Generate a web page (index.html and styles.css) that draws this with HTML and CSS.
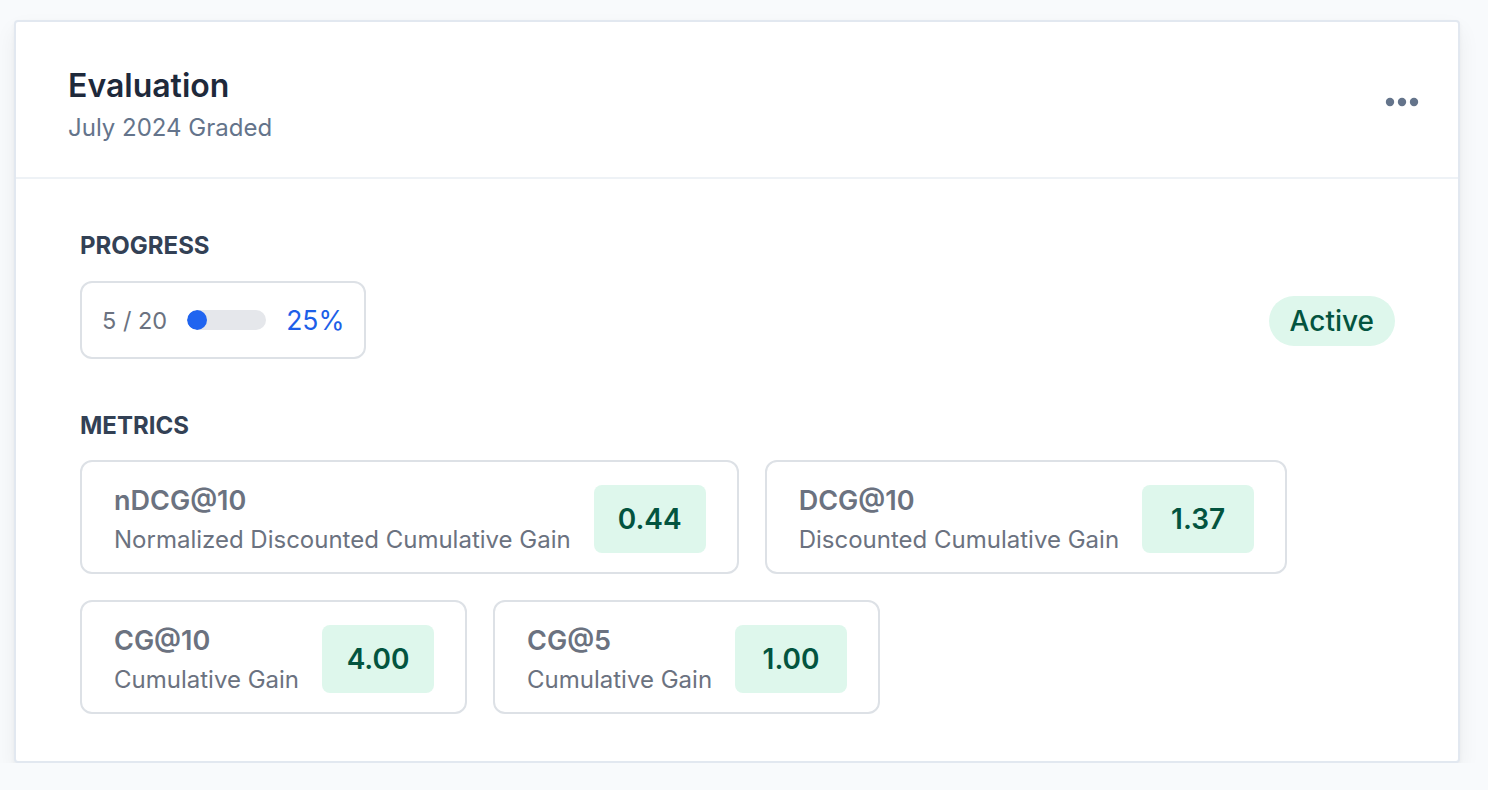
FILE: index.html
```html
<!DOCTYPE html>
<html lang="en">
<head>
<meta charset="utf-8">
<title>Evaluation</title>
<link rel="stylesheet" href="styles.css">
</head>
<body>
<div class="card">
  <div class="card-header">
    <div class="heading">
      <h1 class="title">Evaluation</h1>
      <p class="subtitle">July 2024 Graded</p>
    </div>
    <button class="more" aria-label="More options">
      <svg width="34" height="10" viewBox="0 0 34 10">
        <circle cx="5" cy="5" r="4.2" fill="#64748b"/>
        <circle cx="17" cy="5" r="4.2" fill="#64748b"/>
        <circle cx="29" cy="5" r="4.2" fill="#64748b"/>
      </svg>
    </button>
  </div>
  <div class="card-body">
    <h2 class="section-label">PROGRESS</h2>
    <div class="progress-row">
      <div class="progress-box">
        <span class="count">5 / 20</span>
        <div class="bar"><div class="bar-fill" style="width:25%"></div></div>
        <span class="percent">25%</span>
      </div>
      <span class="badge">Active</span>
    </div>
    <h2 class="section-label metrics-label">METRICS</h2>
    <div class="metrics">
      <div class="metric">
        <div class="metric-text">
          <div class="metric-name">nDCG@10</div>
          <div class="metric-desc">Normalized Discounted Cumulative Gain</div>
        </div>
        <div class="metric-value">0.44</div>
      </div>
      <div class="metric">
        <div class="metric-text">
          <div class="metric-name">DCG@10</div>
          <div class="metric-desc">Discounted Cumulative Gain</div>
        </div>
        <div class="metric-value">1.37</div>
      </div>
      <div class="metric">
        <div class="metric-text">
          <div class="metric-name">CG@10</div>
          <div class="metric-desc">Cumulative Gain</div>
        </div>
        <div class="metric-value">4.00</div>
      </div>
      <div class="metric">
        <div class="metric-text">
          <div class="metric-name">CG@5</div>
          <div class="metric-desc">Cumulative Gain</div>
        </div>
        <div class="metric-value">1.00</div>
      </div>
    </div>
  </div>
</div>
</body>
</html>
```
FILE: styles.css
```css
* { box-sizing: border-box; }
html, body { margin: 0; padding: 0; }
body {
  background: #f8fafc;
  font-family: Inter, "Noto Sans", "Liberation Sans", sans-serif;
  padding: 20px 28px 0 14px;
}
.card {
  background: #ffffff;
  border: 2px solid #e2e8f0;
  border-radius: 4px;
  box-shadow: 0 10px 22px rgba(15, 23, 42, 0.06), 0 2px 4px rgba(15, 23, 42, 0.04);
  width: 1446px;
}
.card-header {
  display: flex;
  justify-content: space-between;
  align-items: center;
  padding: 44px 39px 33px 52px;
  border-bottom: 2px solid #eef2f6;
}
.title {
  margin: 0;
  font-size: 32px;
  line-height: 40px;
  font-weight: 600;
  color: #1e293b;
}
.subtitle {
  margin: 6px 0 0;
  font-size: 24px;
  line-height: 32px;
  color: #64748b;
}
.more {
  border: 0;
  background: none;
  padding: 0;
  margin: 0 0 7px;
  display: flex;
  cursor: pointer;
}
.card-body {
  padding: 51px 63px 47px 64px;
}
.section-label {
  margin: 0;
  font-size: 24px;
  line-height: 32px;
  font-weight: 700;
  color: #334155;
}
.metrics-label { margin-top: 51px; }
.progress-row {
  margin-top: 19px;
  display: flex;
  justify-content: space-between;
  align-items: center;
}
.progress-box {
  display: flex;
  align-items: center;
  gap: 20px;
  height: 78px;
  padding: 0 20px;
  border: 2px solid #dde1e6;
  border-radius: 12px;
}
.count {
  font-size: 23.5px;
  color: #6b7280;
}
.bar {
  width: 79px;
  height: 20px;
  background: #e5e7eb;
  border-radius: 10px;
  overflow: hidden;
}
.bar-fill {
  height: 100%;
  background: #1f64f0;
  border-radius: 10px;
}
.percent {
  font-size: 26.5px;
  color: #1d5fe8;
}
.badge {
  background: #def7ec;
  color: #03543f;
  font-size: 28px;
  font-weight: 500;
  line-height: 36px;
  padding: 7px 21px;
  border-radius: 25px;
  margin-top: 2px;
}
.metrics {
  margin-top: 18px;
  display: flex;
  flex-wrap: wrap;
  gap: 26px;
}
.metric {
  display: flex;
  align-items: center;
  gap: 23px;
  padding: 20px 31px 16px 32px;
  border: 2px solid #dde1e6;
  border-radius: 12px;
  min-height: 114px;
}
.metric-name {
  font-size: 27px;
  line-height: 36px;
  font-weight: 600;
  color: #6b7280;
}
.metric-desc {
  margin-top: 5px;
  font-size: 24px;
  line-height: 32px;
  color: #6b7280;
  white-space: nowrap;
}
.metric-value {
  width: 112px;
  padding: 16px 0;
  text-align: center;
  background: #def7ec;
  color: #03543f;
  font-size: 28px;
  line-height: 36px;
  font-weight: 600;
  border-radius: 8px;
}
```
